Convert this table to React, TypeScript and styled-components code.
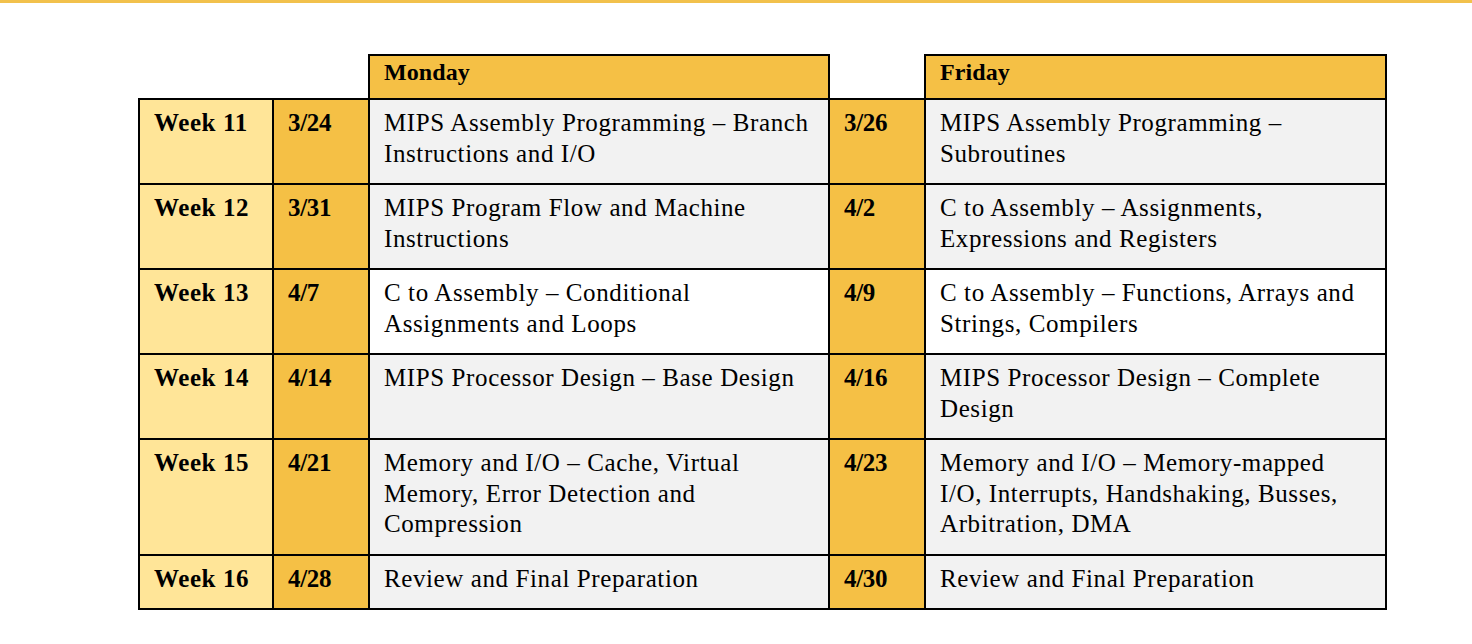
import React, { FC } from "react";
import styled, { createGlobalStyle } from "styled-components";

type Lesson = {
  week: string;
  mon: string;
  monTopic: string[];
  fri: string;
  friTopic: string[];
  plain?: boolean;
};

const Lessons: Array<Lesson> = [
  {
    week: "Week 11",
    mon: "3/24",
    monTopic: ["MIPS Assembly Programming – Branch", "Instructions and I/O"],
    fri: "3/26",
    friTopic: ["MIPS Assembly Programming –", "Subroutines"],
  },
  {
    week: "Week 12",
    mon: "3/31",
    monTopic: ["MIPS Program Flow and Machine", "Instructions"],
    fri: "4/2",
    friTopic: ["C to Assembly – Assignments,", "Expressions and Registers"],
  },
  {
    week: "Week 13",
    mon: "4/7",
    monTopic: ["C to Assembly – Conditional", "Assignments and Loops"],
    fri: "4/9",
    friTopic: ["C to Assembly – Functions, Arrays and", "Strings, Compilers"],
    plain: true,
  },
  {
    week: "Week 14",
    mon: "4/14",
    monTopic: ["MIPS Processor Design – Base Design"],
    fri: "4/16",
    friTopic: ["MIPS Processor Design – Complete", "Design"],
  },
  {
    week: "Week 15",
    mon: "4/21",
    monTopic: [
      "Memory and I/O – Cache, Virtual",
      "Memory, Error Detection and",
      "Compression",
    ],
    fri: "4/23",
    friTopic: [
      "Memory and I/O – Memory-mapped",
      "I/O, Interrupts, Handshaking, Busses,",
      "Arbitration, DMA",
    ],
  },
  {
    week: "Week 16",
    mon: "4/28",
    monTopic: ["Review and Final Preparation"],
    fri: "4/30",
    friTopic: ["Review and Final Preparation"],
  },
];

const GlobalStyle = createGlobalStyle`
  html, body {
    margin: 0;
    padding: 0;
    background: #ffffff;
  }
  body {
    font-family: "Liberation Serif", "Times New Roman", serif;
    color: #000000;
  }
`;

const Page = styled.div`
  width: 1472px;
  height: 644px;
  background: #ffffff;
`;

const TopRule = styled.div`
  height: 3px;
  background-color: #f2c14c;
`;

const Schedule = styled.table`
  margin: 51px 0 0 138px;
  width: 1247px;
  table-layout: fixed;
  border-collapse: collapse;
  font-size: 25px;
  letter-spacing: 0.55px;
  line-height: 30.5px;
`;

const Col = styled.col<{ $w: number }>`
  width: ${(p) => p.$w}px;
`;

const Blank = styled.td`
  border: none;
  padding: 0;
`;

const DayHead = styled.th`
  height: 44px;
  box-sizing: border-box;
  padding: 1px 14px 0;
  text-align: left;
  vertical-align: top;
  font-weight: 700;
  font-size: 24px;
  letter-spacing: 0.1px;
  background-color: #f5c045;
  border: 2px solid #000000;
`;

const Cell = styled.td<{ $tone: "week" | "date" | "topic" | "plain" }>`
  padding: 8px 14px 14px;
  vertical-align: top;
  text-align: left;
  border: 2px solid #000000;
  white-space: nowrap;
  font-weight: ${(p) => (p.$tone === "week" || p.$tone === "date" ? 700 : 400)};
  letter-spacing: ${(p) => (p.$tone === "date" ? "-0.3px" : "0.6px")};
  background-color: ${(p) =>
    p.$tone === "week"
      ? "#ffe598"
      : p.$tone === "date"
      ? "#f5c045"
      : p.$tone === "plain"
      ? "#ffffff"
      : "#f2f2f2"};
`;

const Topic: FC<{ lines: string[] }> = ({ lines }) => (
  <>
    {lines.map((line, id) => (
      <React.Fragment key={id}>
        {id > 0 && <br />}
        {line}
      </React.Fragment>
    ))}
  </>
);

const App: FC = () => {
  return (
    <Page>
      <GlobalStyle />
      <TopRule />
      <Schedule>
        <colgroup>
          <Col $w={134} />
          <Col $w={96} />
          <Col $w={460} />
          <Col $w={96} />
          <Col $w={461} />
        </colgroup>
        <thead>
          <tr>
            <Blank />
            <Blank />
            <DayHead>Monday</DayHead>
            <Blank />
            <DayHead>Friday</DayHead>
          </tr>
        </thead>
        <tbody>
          {Lessons.map((item) => (
            <tr key={item.week}>
              <Cell $tone="week">{item.week}</Cell>
              <Cell $tone="date">{item.mon}</Cell>
              <Cell $tone={item.plain ? "plain" : "topic"}>
                <Topic lines={item.monTopic} />
              </Cell>
              <Cell $tone="date">{item.fri}</Cell>
              <Cell $tone={item.plain ? "plain" : "topic"}>
                <Topic lines={item.friTopic} />
              </Cell>
            </tr>
          ))}
        </tbody>
      </Schedule>
    </Page>
  );
};

export default App;
